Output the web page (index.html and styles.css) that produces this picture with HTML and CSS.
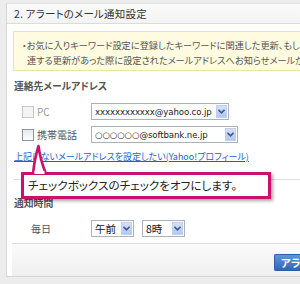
FILE: index.html
```html
<!DOCTYPE html>
<html lang="ja">
<head>
<meta charset="utf-8">
<link rel="stylesheet" href="styles.css">
</head>
<body>
<div class="panel">
  <div class="panel-head">2. アラートのメール通知設定</div>
  <div class="panel-body">
    <div class="notice">
      <p>・お気に入りキーワード設定に登録したキーワードに関連した更新、もし</p>
      <p class="indent">連する更新があった際に設定されたメールアドレスへお知らせメールが</p>
    </div>
    <h3 class="sec-title first">連絡先メールアドレス</h3>
    <div class="row row-pc">
      <label class="chk-label muted"><span class="chk light"></span>PC</label>
      <div class="sel sel-pc"><span class="sel-text">xxxxxxxxxxxx@yahoo.co.jp</span><span class="sel-btn"><svg width="7" height="5" viewBox="0 0 7 5"><path d="M0.5 0.8 L3.5 3.8 L6.5 0.8" fill="none" stroke="#3b5a8c" stroke-width="1.6"/></svg></span></div>
    </div>
    <div class="row row-mob">
      <label class="chk-label"><span class="chk"></span>携帯電話</label>
      <div class="sel sel-mob"><span class="sel-text">○○○○○○@softbank.ne.jp</span><span class="sel-btn"><svg width="7" height="5" viewBox="0 0 7 5"><path d="M0.5 0.8 L3.5 3.8 L6.5 0.8" fill="none" stroke="#3b5a8c" stroke-width="1.6"/></svg></span></div>
    </div>
    <a class="link" href="#">上記にないメールアドレスを設定したい(Yahoo!プロフィール)</a>
    <hr class="sep">
    <h3 class="sec-title">通知時間</h3>
    <div class="row row-time">
      <span class="day">毎日</span>
      <div class="sel sel-small"><span class="sel-text big">午前</span><span class="sel-btn"><svg width="7" height="5" viewBox="0 0 7 5"><path d="M0.5 0.8 L3.5 3.8 L6.5 0.8" fill="none" stroke="#3b5a8c" stroke-width="1.6"/></svg></span></div>
      <div class="sel sel-small"><span class="sel-text big">8時</span><span class="sel-btn"><svg width="7" height="5" viewBox="0 0 7 5"><path d="M0.5 0.8 L3.5 3.8 L6.5 0.8" fill="none" stroke="#3b5a8c" stroke-width="1.6"/></svg></span></div>
    </div>
  </div>
  <div class="panel-foot">
    <span class="btn">アラ</span>
  </div>

  <div class="callout">
    <svg class="callout-arrow" width="20" height="30" viewBox="0 0 20 30">
      <path d="M6 30 C7 20 9 10 11.5 2 C12.5 10 15 20 19 30 Z" fill="#fff" stroke="#c8126e" stroke-width="2.6" stroke-linejoin="round"/>
      <rect x="7.5" y="27" width="10" height="4" fill="#fff"/>
    </svg>
    チェックボックスのチェックをオフにします。
  </div>
</div>
</body>
</html>
```

FILE: styles.css
```css
html, body {
  margin: 0;
  padding: 0;
}
body {
  width: 300px;
  height: 284px;
  overflow: hidden;
  background: #ececec;
  font-family: "Noto Sans CJK JP", "Noto Sans", sans-serif;
  font-feature-settings: "palt";
  color: #444;
}
.panel {
  position: relative;
  margin: 3px 0 0 6px;
  width: 294px;
  border-left: 1px solid #d6d6d6;
  border-top: 1px solid #e2e2e2;
  border-bottom: 1px solid #d4d4d4;
  background: #fff;
  overflow: hidden;
}
.panel-head {
  height: 19px;
  line-height: 19px;
  padding-left: 7px;
  font-size: 10.5px;
  color: #333;
  background: linear-gradient(#fbfbfb, #f3f3f3);
  border-bottom: 1px solid #dcdcdc;
  letter-spacing: 0.2px;
}
.panel-body {
  padding: 0 0 0 7px;
}
.notice {
  margin: 7px 0 0 -1px;
  padding: 6px 0 2px 8px;
  background: #fffbe0;
  border: 1px solid #ece3a6;
  border-right: none;
  font-size: 9.2px;
  line-height: 15px;
  color: #555;
  white-space: nowrap;
  overflow: hidden;
}
.notice p {
  margin: 0;
}
.notice .indent {
  padding-left: 5px;
}
.sec-title {
  margin: 16px 0 0;
  font-size: 9.8px;
  line-height: 14px;
  font-weight: 700;
  color: #555;
}
.sec-title.first {
  margin-top: 8px;
}
.row {
  display: flex;
  align-items: center;
  height: 17px;
}
.row-pc {
  margin-top: 10px;
}
.row-mob {
  margin-top: 6px;
}
.chk-label {
  display: flex;
  align-items: center;
  width: 69px;
  padding-left: 8px;
  font-size: 10px;
  color: #555;
}
.chk-label.muted {
  color: #9a9a9a;
}
.chk {
  display: inline-block;
  width: 10px;
  height: 10px;
  margin-right: 3px;
  border: 1px solid #8a94a4;
  background: linear-gradient(#e6e8ec, #fdfdfd);
}
.chk.light {
  border-color: #c4c6ca;
  background: #f4f4f4;
}
.sel {
  display: flex;
  align-items: center;
  height: 15px;
  border: 1px solid #a9b2bf;
  background: #fff;
  padding: 0 1px 0 3px;
  box-sizing: content-box;
}
.sel-text {
  flex: 1;
  font-family: "DejaVu Sans", sans-serif;
  font-size: 8.6px;
  color: #222;
  white-space: nowrap;
  letter-spacing: -0.1px;
}
.sel-text.big {
  font-family: "Noto Sans CJK JP", sans-serif;
  font-size: 10.5px;
  color: #111;
}
.sel-btn {
  width: 11px;
  height: 13px;
  margin-left: 3px;
  display: flex;
  align-items: center;
  justify-content: center;
  background: linear-gradient(#d4e0fa, #b4c8f2);
  border: 1px solid #c0cfee;
  box-sizing: border-box;
}
.sel-pc {
  width: 132px;
}
.sel-mob {
  width: 141px;
}
.sel-small {
  width: 37px;
  margin-right: 8px;
}
.link {
  display: block;
  margin-top: 7px;
  font-size: 9px;
  line-height: 14px;
  color: #1d5fd3;
  text-decoration: underline;
  white-space: nowrap;
}
.sep {
  margin: 15px 0 0;
  border: none;
  border-top: 1px solid #dedede;
}
.row-time {
  margin-top: 10px;
}
.day {
  width: 60px;
  padding-left: 17px;
  font-size: 10px;
  color: #555;
}
.panel-foot {
  margin-top: 6px;
  margin-left: 5px;
  height: 33px;
  border-top: 1px solid #dddddd;
  background: linear-gradient(#fbfbfb, #efefef);
  display: flex;
  align-items: flex-start;
  padding-left: 262px;
  padding-top: 10px;
  box-sizing: border-box;
}
.btn {
  display: inline-block;
  height: 15px;
  line-height: 15px;
  padding: 0 8px 0 6px;
  border-radius: 2px 0 0 2px;
  background: linear-gradient(#5a97de, #2f67b6);
  border: 1px solid #2a5ea8;
  border-right: none;
  color: #fff;
  font-size: 10.5px;
  font-weight: 700;
  white-space: nowrap;
}
.callout {
  position: absolute;
  left: 14px;
  top: 168px;
  width: 240px;
  height: 21px;
  line-height: 21px;
  padding-left: 4px;
  border: 3px solid #c8126e;
  background: #fff;
  box-shadow: 2px 2px 3px rgba(0,0,0,0.35);
  font-size: 11.6px;
  color: #222;
  white-space: nowrap;
}
.callout-arrow {
  position: absolute;
  left: 3px;
  top: -31px;
}
```
